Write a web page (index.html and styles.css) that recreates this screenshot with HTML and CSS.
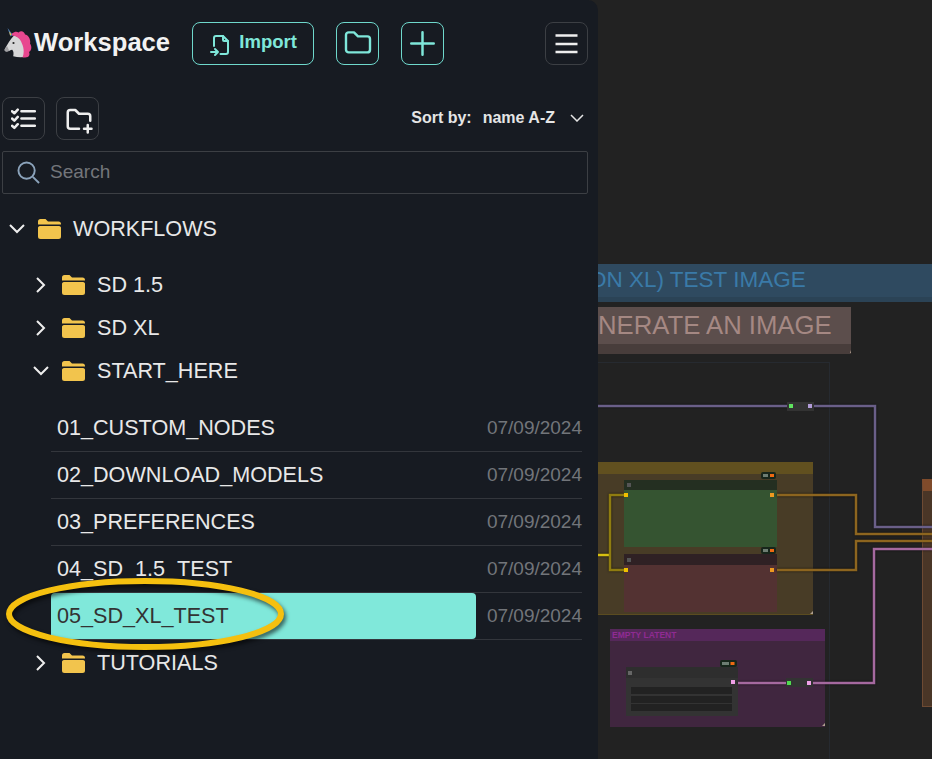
FILE: index.html
```html
<!DOCTYPE html>
<html lang="en">
<head>
<meta charset="utf-8">
<title>Workspace</title>
<link rel="stylesheet" href="styles.css">
</head>
<body>
<div class="app">
  <aside class="sidebar">
    <header class="topbar">
      <h1 class="brand">
        <svg class="unicorn" viewBox="0 0 28 30" aria-label="unicorn">
          <path d="M3.500 0 9 7 6.500 8.500Z" fill="#4f7fb5"/>
          <path d="M5.300 3.500 7.600 6.500 6 7.500Z" fill="#f2c23d"/>
          <path d="M10 7.500C6.500 11 3 17 .8 21c-.6 1.200.2 2.800 1.800 2.600 2.200-.3 3.800-1.500 5.600-1.800 1.500 1.200 1.500 4 1 6.500 4.500 1.300 10 1.300 14 .2C22 20 19 9 10 7.500Z" fill="#d6d6d7"/>
          <path d="M.8 21c-.6 1.200.2 2.800 1.800 2.600 1-.1 1.900-.5 2.700-.9L3 18Z" fill="#a2a2a5"/>
          <path d="M8 5.500C11 3 13 3.500 14.500 4.500 17 2 20.500 3.500 21 6.500c3.500.5 6 5 5 9 2.200 3 1.500 7-1 8.500 1 2 .3 4-1.200 5-1.800.5-3.300.6-5.300.6 2-5 1.300-10-.8-14.500C16.500 11 13 8 8 7.500Z" fill="#e8478f"/>
          <circle cx="9.500" cy="15" r="1.100" fill="#222"/>
        </svg>
        <span>Workspace</span>
      </h1>
      <button class="btn accent import">
        <svg class="ic ic-import" viewBox="0 0 24 24"><path d="M14 3v4a1 1 0 0 0 1 1h4"/><path d="M5 13v-8a2 2 0 0 1 2-2h7l5 5v11a2 2 0 0 1-2 2h-5.500m-9.500-2h7m-3-3l3 3l-3 3"/></svg>
        <span>Import</span>
      </button>
      <button class="btn accent square" aria-label="Open folder">
        <svg class="ic ic-folder" viewBox="0 0 24 24"><path d="M5 4h4l3 3h7a2 2 0 0 1 2 2v8a2 2 0 0 1-2 2h-14a2 2 0 0 1-2-2v-11a2 2 0 0 1 2-2"/></svg>
      </button>
      <button class="btn accent square" aria-label="New">
        <svg class="ic ic-plus" viewBox="0 0 24 24"><path d="M12 2v20M2 12h20"/></svg>
      </button>
      <button class="btn square menu" aria-label="Menu">
        <svg class="ic ic-menu" viewBox="0 0 24 24"><path d="M1 3.500h22M1 12h22M1 20h22"/></svg>
      </button>
    </header>

    <div class="toolbar">
      <button class="btn square" aria-label="Select">
        <svg class="ic ic-md" viewBox="0 0 24 24"><path d="M1 5l2.200 2 3.300-3.500M1 12l2.200 2 3.300-3.500M1 19l2.200 2 3.300-3.500"/><path d="M10 5h13M10 12h13M10 19h13"/></svg>
      </button>
      <button class="btn square" aria-label="New folder">
        <svg class="ic ic-newfolder" viewBox="0 0 24 24"><path d="M12 19h-7a2 2 0 0 1-2-2v-11a2 2 0 0 1 2-2h4l3 3h7a2 2 0 0 1 2 2v3.500"/><path d="M16 19h6M19 16v6"/></svg>
      </button>
      <div class="sort">
        <span class="sort-label">Sort by:</span>
        <span>name A-Z</span>
        <svg class="chev-sm" viewBox="0 0 14 8"><path d="M1 1l6 6 6-6"/></svg>
      </div>
    </div>

    <label class="search">
      <svg class="search-ic" viewBox="0 0 24 24"><circle cx="10" cy="10" r="8.500"/><path d="M16.500 16.500 23 23"/></svg>
      <input type="text" placeholder="Search">
    </label>

    <nav class="tree">
      <div class="folder root">
        <svg class="chev" viewBox="0 0 18 18"><path d="M2 5l7 7 7-7"/></svg>
        <svg class="yf" viewBox="0 0 23 20"><path d="M2.500 0h5l2.500 2.500h10.500a2.500 2.500 0 0 1 2.500 2.500v.6H0V2.500A2.500 2.500 0 0 1 2.500 0Z"/><path d="M2 7h19a2 2 0 0 1 2 1.500V17.500a2.500 2.500 0 0 1-2.500 2.500h-18A2.500 2.500 0 0 1 0 17.500V8.500A2 2 0 0 1 2 7Z"/></svg>
        <span>WORKFLOWS</span>
      </div>
      <div class="folder nested first">
        <svg class="chev" viewBox="0 0 18 18"><path d="M5 2l7 7-7 7"/></svg>
        <svg class="yf" viewBox="0 0 23 20"><path d="M2.500 0h5l2.500 2.500h10.500a2.500 2.500 0 0 1 2.500 2.500v.6H0V2.500A2.500 2.500 0 0 1 2.500 0Z"/><path d="M2 7h19a2 2 0 0 1 2 1.500V17.500a2.500 2.500 0 0 1-2.500 2.500h-18A2.500 2.500 0 0 1 0 17.500V8.500A2 2 0 0 1 2 7Z"/></svg>
        <span>SD 1.5</span>
      </div>
      <div class="folder nested">
        <svg class="chev" viewBox="0 0 18 18"><path d="M5 2l7 7-7 7"/></svg>
        <svg class="yf" viewBox="0 0 23 20"><path d="M2.500 0h5l2.500 2.500h10.500a2.500 2.500 0 0 1 2.500 2.500v.6H0V2.500A2.500 2.500 0 0 1 2.500 0Z"/><path d="M2 7h19a2 2 0 0 1 2 1.500V17.500a2.500 2.500 0 0 1-2.500 2.500h-18A2.500 2.500 0 0 1 0 17.500V8.500A2 2 0 0 1 2 7Z"/></svg>
        <span>SD XL</span>
      </div>
      <div class="folder nested">
        <svg class="chev" viewBox="0 0 18 18"><path d="M2 5l7 7 7-7"/></svg>
        <svg class="yf" viewBox="0 0 23 20"><path d="M2.500 0h5l2.500 2.500h10.500a2.500 2.500 0 0 1 2.500 2.500v.6H0V2.500A2.500 2.500 0 0 1 2.500 0Z"/><path d="M2 7h19a2 2 0 0 1 2 1.500V17.500a2.500 2.500 0 0 1-2.500 2.500h-18A2.500 2.500 0 0 1 0 17.500V8.500A2 2 0 0 1 2 7Z"/></svg>
        <span>START_HERE</span>
      </div>
      <ul class="files">
        <li class="file"><span class="name">01_CUSTOM_NODES</span><time>07/09/2024</time></li>
        <li class="file"><span class="name">02_DOWNLOAD_MODELS</span><time>07/09/2024</time></li>
        <li class="file"><span class="name">03_PREFERENCES</span><time>07/09/2024</time></li>
        <li class="file"><span class="name">04_SD_1.5_TEST</span><time>07/09/2024</time></li>
        <li class="file selected"><span class="name">05_SD_XL_TEST</span><time>07/09/2024</time></li>
      </ul>
      <div class="folder nested tail">
        <svg class="chev" viewBox="0 0 18 18"><path d="M5 2l7 7-7 7"/></svg>
        <svg class="yf" viewBox="0 0 23 20"><path d="M2.500 0h5l2.500 2.500h10.500a2.500 2.500 0 0 1 2.500 2.500v.6H0V2.500A2.500 2.500 0 0 1 2.500 0Z"/><path d="M2 7h19a2 2 0 0 1 2 1.500V17.500a2.500 2.500 0 0 1-2.500 2.500h-18A2.500 2.500 0 0 1 0 17.500V8.500A2 2 0 0 1 2 7Z"/></svg>
        <span>TUTORIALS</span>
      </div>
    </nav>
  </aside>

  <main class="canvas">
    <div class="frame"></div>
    <div class="note note-blue"><span>ON XL) TEST IMAGE</span></div>
    <div class="note note-brown"><span>NERATE AN IMAGE</span></div>

    <div class="group group-yellow"></div>
    <div class="node node-green"></div>
    <div class="node node-red"></div>
    <div class="group group-purple"><span>EMPTY LATENT</span></div>
    <div class="node node-latent">
      <div class="field"></div><div class="field"></div><div class="field"></div>
    </div>
    <div class="node node-side"></div>

    <svg class="wires" viewBox="0 0 334 759">
      <g class="wire-lines" fill="none" stroke-width="2.500">
        <path d="M0 406H277V527H334" stroke="#6a5f88"/>
        <path d="M0 555H12" stroke="#d8c010"/>
        <path d="M26 495H12V570H26" stroke="#8f7c10"/>
        <path d="M179 495H258V534H334" stroke="#8d651f"/>
        <path d="M179 570H258V541H334" stroke="#8d651f"/>
        <path d="M334 549H276V683H140" stroke="#a5699f"/>
      </g>
      <g>
        <rect x="189" y="402" width="27" height="9" fill="#333"/>
        <rect x="191" y="404" width="4" height="4" fill="#5fe35f"/>
        <rect x="210" y="404" width="4" height="4" fill="#b29cd8"/>
        <rect x="188" y="678" width="27" height="9" fill="#333"/>
        <rect x="189" y="681" width="4" height="4" fill="#4fdc4f"/>
        <rect x="209" y="681" width="4" height="4" fill="#f0a0e8"/>
        <rect x="133" y="680" width="4" height="4" fill="#f0a0e8"/>
        <rect x="26" y="493" width="4" height="4" fill="#f0c000"/>
        <rect x="26" y="568" width="4" height="4" fill="#f0c000"/>
        <rect x="172" y="493" width="4" height="4" fill="#ee9a20"/>
        <rect x="172" y="568" width="4" height="4" fill="#ee9a20"/>
        <rect x="29" y="483" width="4" height="4" fill="#555"/>
        <rect x="29" y="558" width="4" height="4" fill="#555"/>
        <rect x="30" y="671" width="4" height="4" fill="#666"/>
        <rect x="163" y="472" width="15" height="7" rx="2" fill="#17261b"/>
        <rect x="163" y="547" width="15" height="7" rx="2" fill="#17261b"/>
        <rect x="122" y="660" width="17" height="7" rx="2" fill="#17261b"/>
        <rect x="165" y="474" width="5" height="3" fill="#6d7d72"/>
        <rect x="165" y="549" width="5" height="3" fill="#6d7d72"/>
        <rect x="124" y="662" width="7" height="3" fill="#6d7d72"/>
        <rect x="172" y="474" width="4" height="3" fill="#ee6a12"/>
        <rect x="172" y="549" width="4" height="3" fill="#ee6a12"/>
        <rect x="132.500" y="662" width="4" height="3" fill="#ee6a12"/>
        <path d="M252 353l1-3v3zM215 614l-3 0 3-3zM227 726l-3 0 3-3z" fill="#b0a090"/>
      </g>
    </svg>
  </main>

  <svg class="annotation" viewBox="0 0 300 90" aria-hidden="true">
    <ellipse cx="145" cy="44" rx="136" ry="33" fill="none" stroke="#f5c00f" stroke-width="6"/>
  </svg>
</div>
</body>
</html>
```

FILE: styles.css
```css
* { box-sizing: border-box; }
html, body { margin: 0; height: 100%; }
body {
  background: #222;
  color: #e8e8e8;
  font-family: "Liberation Sans", Arial, sans-serif;
  overflow: hidden;
}
.app {
  position: relative;
  display: flex;
  height: 100vh;
  overflow: hidden;
}
.sidebar {
  flex: 0 0 598px;
  display: flex;
  flex-direction: column;
  padding: 22px 10px 0 2px;
  background: #171b22;
  border-top-right-radius: 10px;
  z-index: 1;
}
.topbar {
  display: flex;
  align-items: center;
  gap: 22px;
  height: 43px;
}
.brand {
  display: flex;
  align-items: center;
  gap: 2px;
  margin: 0;
  font-size: 25.600px;
  font-weight: 700;
  color: #f2f2f2;
  line-height: 41px;
}
.brand span { margin-bottom: 2px; }
.unicorn {
  width: 28px;
  height: 30px;
  margin-left: 2px;
  margin-bottom: 1px;
}
.btn {
  display: inline-flex;
  align-items: center;
  justify-content: center;
  height: 43px;
  padding: 0;
  background: transparent;
  border: 1px solid #3c3f44;
  border-radius: 8px;
  color: #eee;
  font: inherit;
}
.square { width: 43px; flex: none; }
.accent { border-color: #6fd8cc; color: #7fe7da; }
.import {
  width: 122px;
  gap: 6px;
  font-size: 18.500px;
  font-weight: 700;
}
.import span { margin-bottom: 3px; }
.menu { margin-left: auto; }
.ic {
  fill: none;
  stroke: currentColor;
  stroke-width: 2;
  stroke-linecap: round;
  stroke-linejoin: round;
}
.ic-import { width: 24px; height: 24px; margin-top: 2px; }
.ic-folder { width: 32px; height: 32px; stroke-width: 1.800; margin-top: -1px; }
.ic-plus { width: 27px; height: 27px; stroke-width: 2.200; }
.ic-menu { width: 27px; height: 24px; stroke-width: 2.600; stroke-linecap: butt; margin-right: 1px; }
.ic-md { width: 25px; height: 25px; stroke-width: 2.400; }
.ic-newfolder { width: 30px; height: 30px; stroke-width: 2; margin-left: 2px; margin-top: 2px; }
.toolbar {
  display: flex;
  align-items: center;
  gap: 11px;
  margin-top: 32px;
}
.sort {
  display: flex;
  align-items: center;
  margin-left: auto;
  margin-right: 4px;
  font-size: 16px;
  font-weight: 700;
  color: #e5e5e5;
  transform: translateY(-1px);
}
.sort-label { margin-right: 11px; }
.chev-sm {
  width: 14px;
  height: 8px;
  margin-left: 15px;
  fill: none;
  stroke: #e5e5e5;
  stroke-width: 1.500;
}
.search {
  display: flex;
  align-items: center;
  gap: 10px;
  height: 43px;
  margin-top: 11px;
  padding-left: 14px;
  border: 1px solid #3c3f44;
  border-radius: 2px;
}
.search-ic {
  width: 23px;
  height: 23px;
  fill: none;
  stroke: #8ba3bb;
  stroke-width: 2;
}
.search input {
  flex: 1;
  min-width: 0;
  margin-bottom: 2px;
  border: 0;
  outline: 0;
  padding: 0;
  background: transparent;
  color: #eee;
  font: 19px "Liberation Sans", Arial, sans-serif;
}
.search input::placeholder { color: #73767b; opacity: 1; }
.tree {
  display: flex;
  flex-direction: column;
  margin-top: 13px;
  font-size: 21.600px;
  color: #e8e8e8;
}
.folder {
  display: flex;
  align-items: center;
  height: 43px;
}
.root { padding-left: 6px; }
.nested { padding-left: 30px; }
.first { margin-top: 13px; }
.chev {
  flex: none;
  width: 18px;
  height: 18px;
  fill: none;
  stroke: #eee;
  stroke-width: 2;
}
.yf {
  flex: none;
  width: 23px;
  height: 20px;
  margin: 0 12px 0 12px;
  fill: #f2c44d;
}
.files {
  list-style: none;
  margin: 13px 0 0;
  padding: 0 6px 0 49px;
}
.file {
  display: flex;
  align-items: stretch;
  height: 47px;
  border-bottom: 1px solid #33363c;
}
.name {
  flex: 0 0 425px;
  display: flex;
  align-items: center;
  padding-left: 6px;
  border-radius: 4px;
}
.file time {
  flex: 1;
  align-self: center;
  text-align: right;
  font-size: 19px;
  color: #72757a;
}
.selected .name {
  background: #80e8da;
  color: #333;
}
.tail { margin-top: 1px; }

.canvas {
  position: relative;
  flex: 1;
  min-width: 0;
  background: #222;
  overflow: hidden;
}
.canvas > * { position: absolute; }
.frame {
  left: -2px;
  top: 362px;
  width: 234px;
  height: 420px;
  border: 1px solid #262a30;
}
.wires { left: 0; top: 0; width: 334px; height: 759px; }
.wire-lines { filter: drop-shadow(0 0 1px rgba(0,0,0,.7)); }
.note { overflow: hidden; white-space: nowrap; }
.note-blue {
  left: 0;
  right: 0;
  top: 264px;
  height: 38px;
  background: #2f4a60;
  border-bottom: 5px solid #2b4356;
  color: #3a7aa8;
  font-size: 22.500px;
  line-height: 32px;
}
.note-blue span { margin-left: -9px; }
.note-brown {
  left: 0;
  top: 307px;
  width: 253px;
  height: 47px;
  background: #5c4e4c;
  border-bottom: 10px solid #483d3b;
  color: #a58883;
  font-size: 25.700px;
  line-height: 36px;
}
.group-yellow {
  left: 0;
  top: 462px;
  width: 215px;
  height: 153px;
  background: #483c26;
  border-top: 12px solid #61501f;
  border-bottom: 1px solid #5b4c20;
}
.node-green {
  left: 26px;
  top: 480px;
  width: 153px;
  height: 67px;
  background: #355431;
  border-top: 10px solid #242f21;
}
.node-red {
  left: 26px;
  top: 554px;
  width: 153px;
  height: 58px;
  background: #533232;
  border-top: 11px solid #2f2124;
}
.group-purple {
  left: 12px;
  top: 629px;
  width: 215px;
  height: 98px;
  background: #40263f;
  border-top: 12px solid #55285a;
}
.group-purple span {
  position: absolute;
  top: -12px;
  left: 2px;
  font-size: 8.500px;
  font-weight: 700;
  line-height: 12px;
  color: #8f2b92;
}
.node-latent {
  left: 28px;
  top: 667px;
  width: 112px;
  height: 49px;
  padding: 9px 6px 0 5px;
  background: #333;
  border-top: 11px solid #2e2e2e;
  display: flex;
  flex-direction: column;
  gap: 1.500px;
}
.field { height: 7px; background: #222; }
.node-side {
  left: 324px;
  top: 479px;
  width: 20px;
  height: 228px;
  background: #4a3627;
  border-left: 1px solid #6d4a33;
  border-top: 12px solid #7f4b2b;
  border-bottom: 1px solid #6d4a33;
}
.annotation {
  position: absolute;
  left: 0;
  top: 570px;
  width: 300px;
  height: 90px;
  z-index: 2;
  filter: drop-shadow(2px 3px 2px rgba(0,0,0,.6));
}
```
